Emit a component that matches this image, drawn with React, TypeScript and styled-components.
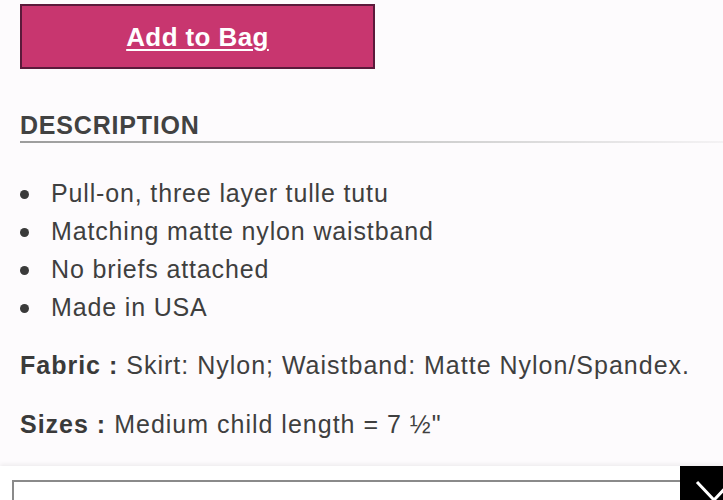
import React from "react";
import styled, { createGlobalStyle } from "styled-components";

const Global = createGlobalStyle`
  html, body {
    margin: 0;
    padding: 0;
    background: #fdfbfd;
    overflow: hidden;
  }
  body {
    font-family: "Liberation Sans", Arial, sans-serif;
  }
`;

const items = [
  "Pull-on, three layer tulle tutu",
  "Matching matte nylon waistband",
  "No briefs attached",
  "Made in USA",
];

export default function App() {
  return (
    <>
      <Global />
      <Page>
        <Content>
          <BagButton>Add to Bag</BagButton>
          <Heading>DESCRIPTION</Heading>
          <Bullets>
            {items.map((it) => (
              <Bullet key={it}>{it}</Bullet>
            ))}
          </Bullets>
          <Detail>
            <b>Fabric :</b> Skirt: Nylon; Waistband: Matte Nylon/Spandex.
          </Detail>
          <Detail>
            <b>Sizes :</b> Medium child length = 7 ½"
          </Detail>
        </Content>
        <Footer>
          <Field />
          <Toggle>
            <svg width="43" height="34" viewBox="0 0 43 34">
              <path d="M17 16 L34 34 L51 16" stroke="#fff" strokeWidth="3" fill="none" />
            </svg>
          </Toggle>
        </Footer>
      </Page>
    </>
  );
}

const Page = styled.div`
  width: 723px;
  height: 500px;
  display: flex;
  flex-direction: column;
  overflow: hidden;
`;

const Content = styled.div`
  flex: 1;
  padding: 4px 0 0 20px;
`;

const BagButton = styled.button`
  display: block;
  width: 355px;
  height: 65px;
  background: #c8366f;
  border: 2px solid #5b1a3b;
  color: #fff;
  font-family: "Liberation Sans", Arial, sans-serif;
  font-weight: 700;
  font-size: 26px;
  letter-spacing: 0.4px;
  text-decoration: underline;
  text-underline-offset: 3px;
  text-decoration-thickness: 2px;
  padding: 2px 0 0 0;
`;

const Heading = styled.h2`
  margin: 42px 0 0 0;
  font-size: 25px;
  font-weight: 700;
  letter-spacing: 0.8px;
  color: #424242;
  line-height: 28px;
  padding-bottom: 2px;
  border-bottom: 2px solid transparent;
  border-image: linear-gradient(to right, #9c9c9c, #d0d0d0 60%, #f4f2f4) 1;
`;

const Bullets = styled.ul`
  margin: 31px 0 0 0;
  padding: 0;
  list-style: none;
  color: #3f3f3f;
`;

const Bullet = styled.li`
  display: flex;
  align-items: center;
  font-size: 25px;
  line-height: 38px;
  letter-spacing: 0.85px;
  &::before {
    content: "";
    width: 9px;
    height: 9px;
    border-radius: 50%;
    background: #3a3a3a;
    margin: 2px 22px 0 0;
    flex: none;
  }
`;

const Detail = styled.p`
  margin: 20px 0 0 0;
  font-size: 25px;
  letter-spacing: 1px;
  line-height: 38px;
  color: #3f3f3f;
  & + & {
    margin-top: 21px;
  }
  b {
    color: #3a3a3a;
  }
`;

const Footer = styled.div`
  height: 34px;
  background: #fff;
  box-shadow: 0 -2px 4px rgba(0, 0, 0, 0.06);
  display: flex;
  align-items: flex-start;
`;

const Field = styled.div`
  flex: 1;
  margin: 14px 0 0 12px;
  height: 30px;
  border-top: 2px solid #8a8a8a;
  border-left: 2px solid #8a8a8a;
`;

const Toggle = styled.div`
  width: 43px;
  height: 34px;
  background: #000;
  display: flex;
`;
